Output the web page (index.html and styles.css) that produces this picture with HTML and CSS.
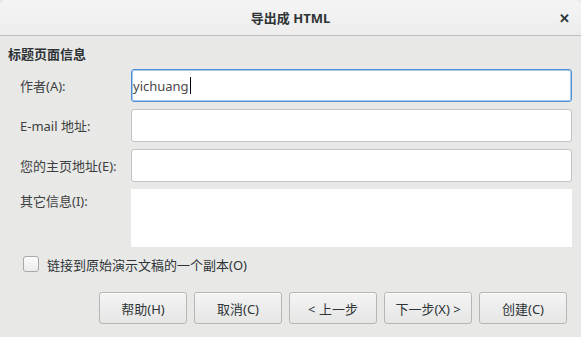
FILE: index.html
```html
<!DOCTYPE html>
<html lang="zh-CN">

<head>
    <meta charset="UTF-8">
    <title>导出成 HTML</title>
    <link rel="stylesheet" href="styles.css">
</head>

<body>
    <div class="dialog">
        <div class="titlebar">
            <span></span>
            <span class="title">导出成 HTML</span>
            <span class="close">✕</span>
        </div>

        <div class="content">
            <h4 class="section">标题页面信息</h4>

            <div class="form">
                <label class="label">作者(A):</label>
                <div class="entry focused">yichuang<span class="caret"></span></div>

                <label class="label">E-mail 地址:</label>
                <div class="entry"></div>

                <label class="label">您的主页地址(E):</label>
                <div class="entry"></div>

                <label class="label top">其它信息(I):</label>
                <div class="textarea"></div>
            </div>

            <div class="check-row">
                <span class="checkbox"></span>
                <span>链接到原始演示文稿的一个副本(O)</span>
            </div>

            <div class="buttons">
                <div class="btn">帮助(H)</div>
                <div class="btn">取消(C)</div>
                <div class="btn">&lt; 上一步</div>
                <div class="btn">下一步(X) &gt;</div>
                <div class="btn">创建(C)</div>
            </div>
        </div>
    </div>
</body>

</html>
```

FILE: styles.css
```css
* {
    margin: 0;
    padding: 0;
    box-sizing: border-box;
    font-family: "Noto Sans", "Noto Sans CJK SC", sans-serif;
}

body {
    background-color: #e8e8e7;
    width: 581px;
    height: 337px;
    overflow: hidden;
}

.dialog {
    height: 337px;
    display: flex;
    flex-direction: column;
    color: #2e3436;
    font-size: 13px;
}

.titlebar {
    height: 36px;
    display: grid;
    grid-template-columns: 1fr auto 1fr;
    align-items: center;
    background: linear-gradient(#f4f4f4, #ededed);
    border-bottom: 1px solid #bdbdbd;
    border-radius: 6px 6px 0 0;
}

.title {
    font-weight: bold;
    font-size: 13px;
}

.close {
    justify-self: end;
    margin-right: 11px;
    font-weight: bold;
    font-size: 13px;
    color: #2e3436;
}

.content {
    flex: 1;
    display: flex;
    flex-direction: column;
    padding: 9px 9px 0 8px;
}

.section {
    font-size: 13px;
    font-weight: bold;
    line-height: 18px;
}

.form {
    margin-top: 6px;
    padding-left: 12px;
    display: grid;
    grid-template-columns: 111px 1fr;
    grid-template-rows: 33px 33px 33px 58px;
    row-gap: 7px;
}

.label {
    align-self: center;
    color: #3c3f40;
}

.label.top {
    align-self: start;
    padding-top: 2px;
}

.entry {
    background-color: #ffffff;
    border: 1px solid #c2c2c2;
    border-radius: 3px;
    display: flex;
    align-items: center;
    padding-left: 1px;
    font-size: 13px;
    color: #4a4a4a;
}

.entry.focused {
    border: 1px solid #4a90d9;
    box-shadow: inset 0 0 0 1px #a9c9ee;
}

.caret {
    width: 1px;
    height: 17px;
    background-color: #000;
    margin-left: 1px;
}

.textarea {
    background-color: #ffffff;
}

.check-row {
    margin-top: 9px;
    padding-left: 15px;
    display: flex;
    align-items: center;
    gap: 8px;
    height: 16px;
}

.checkbox {
    width: 16px;
    height: 16px;
    border: 1px solid #a9a9a9;
    border-radius: 3px;
    background: linear-gradient(#fbfbfb, #ececec);
}

.buttons {
    margin-top: 20px;
    padding-right: 5px;
    display: flex;
    justify-content: flex-end;
    gap: 7px;
}

.btn {
    width: 88px;
    height: 32px;
    display: flex;
    align-items: center;
    justify-content: center;
    border: 1px solid #b6b6b3;
    border-radius: 3px;
    background: linear-gradient(#f4f4f4, #e6e6e5);
    box-shadow: inset 0 1px #ffffff;
    color: #2e3436;
}
```
